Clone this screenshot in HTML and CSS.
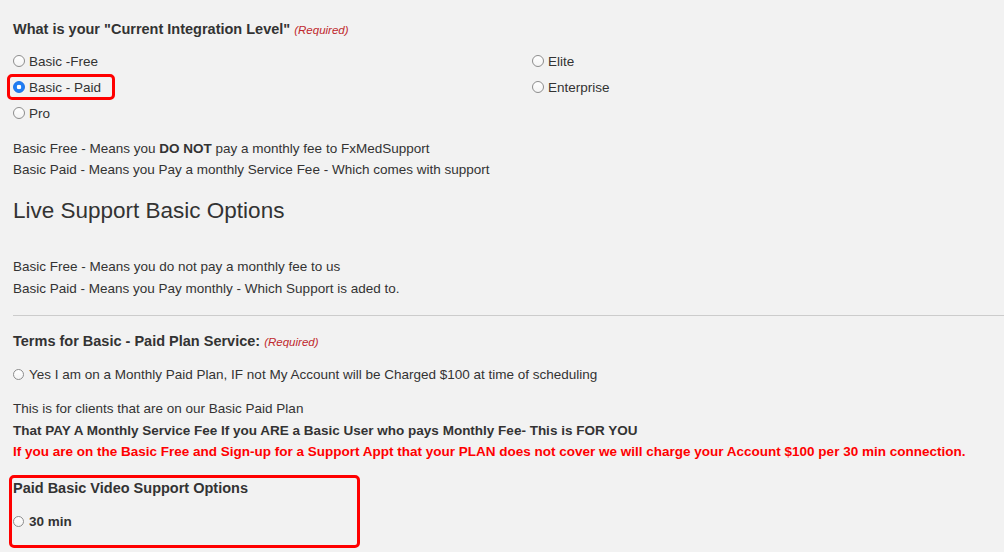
FILE: index.html
```html
<!DOCTYPE html>
<html lang="en">

<head>
    <meta charset="UTF-8">
    <meta name="viewport" content="width=device-width, initial-scale=1.0">
    <title>Support Options</title>
    <link rel="stylesheet" href="styles.css">
</head>

<body>
    <form class="form">
        <!-- Integration level -->
        <div class="field">
            <div class="field-label">What is your "Current Integration Level" <span class="required">(Required)</span></div>
            <div class="choices">
                <div class="col">
                    <label class="option"><input type="radio" name="level"> Basic -Free</label>
                    <label class="option marked"><input type="radio" name="level" checked> Basic - Paid</label>
                    <label class="option"><input type="radio" name="level"> Pro</label>
                </div>
                <div class="col">
                    <label class="option"><input type="radio" name="level"> Elite</label>
                    <label class="option"><input type="radio" name="level"> Enterprise</label>
                </div>
            </div>
            <div class="desc">
                <p>Basic Free - Means you <b>DO NOT</b> pay a monthly fee to FxMedSupport</p>
                <p>Basic Paid - Means you Pay a monthly Service Fee - Which comes with support</p>
            </div>
        </div>

        <h2 class="section-title">Live Support Basic Options</h2>
        <div class="desc wide">
            <p>Basic Free - Means you do not pay a monthly fee to us</p>
            <p>Basic Paid - Means you Pay monthly - Which Support is aded to.</p>
        </div>

        <hr>

        <!-- Terms -->
        <div class="field">
            <div class="field-label">Terms for Basic - Paid Plan Service: <span class="required">(Required)</span></div>
            <label class="option terms"><input type="radio" name="terms"> Yes I am on a Monthly Paid Plan, IF not My Account will be Charged $100 at time of scheduling</label>
            <div class="notes">
                <p>This is for clients that are on our Basic Paid Plan</p>
                <p class="strong">That PAY A Monthly Service Fee If you ARE a Basic User who pays Monthly Fee- This is FOR YOU</p>
                <p class="strong warn">If you are on the Basic Free and Sign-up for a Support Appt that your PLAN does not cover we will charge your Account $100 per 30 min connection.</p>
            </div>
        </div>

        <div class="video-box">
            <div class="field-label">Paid Basic Video Support Options</div>
            <label class="option strong"><input type="radio" name="video"> 30 min</label>
        </div>
    </form>
</body>

</html>
```

FILE: styles.css
```css
body {
    margin: 0;
    background-color: #f2f2f2;
    color: #333;
    font-family: "Liberation Sans", Arial, sans-serif;
    font-size: 13.5px;
    overflow: hidden;
}

p {
    margin: 0;
}

.form {
    padding: 21px 0 0 13px;
}

.field-label {
    font-weight: bold;
    font-size: 14.5px;
    line-height: 16px;
}

.required {
    color: #c0282d;
    font-weight: normal;
    font-style: italic;
    font-size: 11.5px;
}

.choices {
    display: grid;
    grid-template-columns: 519px 1fr;
    margin-top: 10px;
}

.col {
    display: flex;
    flex-direction: column;
}

.option {
    display: flex;
    align-items: center;
    height: 26px;
}

.option input {
    appearance: none;
    width: 12px;
    height: 12px;
    margin: 0 4px 0 0;
    border: 1px solid #8d8d8d;
    border-radius: 50%;
    background: linear-gradient(#fff, #f4f4f4);
    box-sizing: border-box;
}

.option input:checked {
    border-color: #1b72e8;
    background: radial-gradient(circle, #fff 0 2px, #1f7cf4 2.6px);
}

.option.marked {
    position: relative;
    align-self: flex-start;
}

.option.marked::after {
    content: '';
    position: absolute;
    left: -6px;
    top: 0;
    width: 108px;
    height: 26px;
    border: 3px solid #f00;
    border-radius: 5px;
    box-sizing: border-box;
}

.desc {
    margin-top: 12px;
    line-height: 21px;
}

.desc.wide {
    margin-top: 32px;
    line-height: 22px;
}

.section-title {
    margin: 18px 0 0;
    font-size: 22.5px;
    font-weight: normal;
    line-height: 26px;
}

hr {
    border: none;
    border-top: 1px solid #ccc;
    margin: 15px 0 17px;
}

.terms {
    margin-top: 11px;
}

.terms input,
.video-box input {
    width: 11px;
    height: 11px;
    margin-right: 5px;
}

.notes {
    margin-top: 11px;
    line-height: 21.5px;
}

.strong {
    font-weight: bold;
}

.warn {
    color: #f00;
}

.video-box {
    width: 351px;
    height: 73px;
    margin: 12px 0 0 -4px;
    padding: 2px 0 0 1px;
    border: 3px solid #f00;
    border-radius: 5px;
    box-sizing: border-box;
}

.video-box .option {
    margin-top: 13px;
}
```
